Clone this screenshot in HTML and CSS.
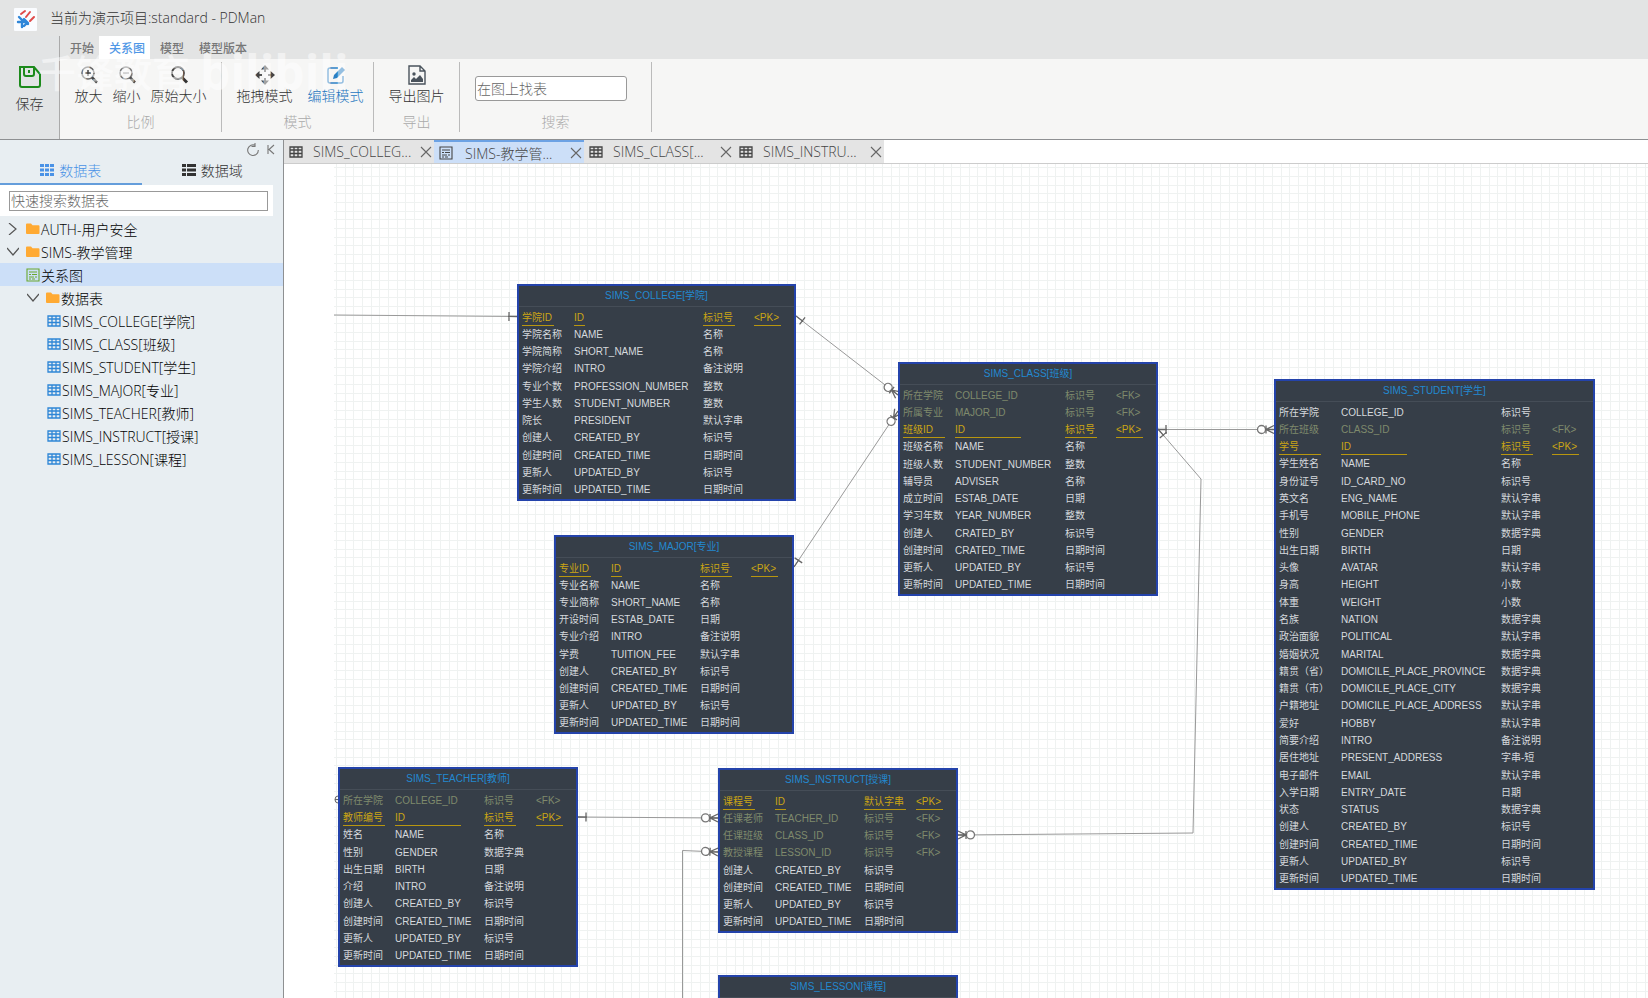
FILE: index.html
```html
<!DOCTYPE html>
<html lang="zh-CN">
<head>
<meta charset="utf-8">
<title>当前为演示项目:standard - PDMan</title>
<link rel="stylesheet" href="styles.css">
</head>
<body>
<svg class="sprite" aria-hidden="true">
  <symbol id="i-grid" viewBox="0 0 14 12"><path d="M1 1h12v10H1zM1 4h12M1 7.5h12M5 1v10M9 1v10" fill="none" stroke="currentColor" stroke-width="1.3"/></symbol>
  <symbol id="i-sheet" viewBox="0 0 14 14"><path d="M1 1h12v12H1z" fill="none" stroke="currentColor" stroke-width="1.1"/><path d="M3 4h8M3 6.500h2M6 6.500h5M3 9h5M9 9h2M3 11h2M6 11h3" fill="none" stroke="currentColor" stroke-width="1"/></symbol>
  <symbol id="i-folder" viewBox="0 0 14 12"><path d="M0 1.5Q0 .5 1 .5h4l1.5 1.7H12.500q1 0 1 1V10q0 1-1 1H1q-1 0-1-1z" fill="#ffaa33"/></symbol>
  <symbol id="i-right" viewBox="0 0 12 12"><path d="M2 0l7 6-7 6" fill="none" stroke="#555" stroke-width="1.2"/></symbol>
  <symbol id="i-down" viewBox="0 0 12 12"><path d="M0 2l6 7 6-7" fill="none" stroke="#555" stroke-width="1.2"/></symbol>
  <symbol id="i-close" viewBox="0 0 12 12"><path d="M1 1l10 10M11 1L1 11" fill="none" stroke="#666" stroke-width="1.1"/></symbol>
</svg>

<div class="app">
  <header class="titlebar">
    <svg class="logo" viewBox="0 0 23 23"><rect width="23" height="23" rx="1" fill="#fafcff"/><path d="M7 6l4-3M12 9l4-5M16 13l4-4" stroke="#e04a4a" stroke-width="2" stroke-linecap="round"/><path d="M5 9l4 4M10 11l4 4M4 14h7M9 13l5 3M8 16v3M13 15l-3 3" stroke="#2f86d8" stroke-width="2.400" fill="none" stroke-linecap="round" stroke-linejoin="round"/></svg>
    <h1 class="title">当前为演示项目:standard - PDMan</h1>
  </header>

  <div class="ribbon">
    <button class="save"><svg class="save-icon" viewBox="0 0 24 24"><path d="M2 2h14l6 7v11q0 2-2 2H4q-2 0-2-2zM6 2v7q0 2 2 2h6q2 0 2-2V2" fill="none" stroke="#1c8a1c" stroke-width="2"/><path d="M11 5v3" stroke="#1c8a1c" stroke-width="2"/></svg>保存</button>
    <div class="ribbon-main">
      <nav class="menu">
        <button class="menu-item">开始</button>
        <button class="menu-item active">关系图</button>
        <button class="menu-item">模型</button>
        <button class="menu-item">模型版本</button>
      </nav>
      <div class="groups">
        <section class="group zoomers">
          <div class="tools">
            <button class="tool"><svg class="icon" viewBox="0 0 20 20"><circle cx="9" cy="8" r="6" fill="none" stroke="#666" stroke-width="1.600"/><path d="M6 8h6M9 5v6" stroke="#444" stroke-width="1.500"/><path d="M13 12.500l5 5" stroke="#444" stroke-width="2.500"/></svg>放大</button>
            <button class="tool"><svg class="icon" viewBox="0 0 20 20"><circle cx="9" cy="8" r="6" fill="none" stroke="#777" stroke-width="1.600"/><path d="M6 8h6" stroke="#999" stroke-width="1.500"/><path d="M13 12.500l5 5" stroke="#444" stroke-width="2.500"/></svg>缩小</button>
            <button class="tool"><svg class="icon" viewBox="0 0 20 20"><circle cx="9" cy="8" r="6" fill="none" stroke="#444" stroke-width="1.800"/><path d="M13 12.500l5 5" stroke="#333" stroke-width="3"/></svg>原始大小</button>
          </div>
          <span class="group-name">比例</span>
        </section>
        <section class="group modes">
          <div class="tools">
            <button class="tool"><svg class="icon" viewBox="0 0 20 20"><path d="M10 3v4M10 13v4M3 10h4M13 10h4" stroke="#555" stroke-width="2"/><path d="M10 0l4 4.500H6zM10 20l4-4.500H6zM0 10l4.500-4v8zM20 10l-4.500-4v8z" fill="#444"/></svg>拖拽模式</button>
            <button class="tool current"><svg class="icon" viewBox="0 0 20 20"><path d="M12 3H4Q2 3 2 5v11q0 2 2 2h11q2 0 2-2v-5" fill="none" stroke="#2b7fc3" stroke-width="1.500"/><path d="M7 14l1-4 8-8 3 3-8 8z" fill="#2b7fc3"/></svg>编辑模式</button>
          </div>
          <span class="group-name">模式</span>
        </section>
        <section class="group export">
          <div class="tools">
            <button class="tool"><svg class="icon" viewBox="0 0 20 20"><path d="M2 1h11l5 5v13H2zM13 1v5h5" fill="none" stroke="#4a535c" stroke-width="1.400"/><circle cx="7" cy="9" r="1.700" fill="#4a535c"/><path d="M4 17v-2l3-3 2 2 4-4 3 4v3z" fill="#4a535c"/></svg>导出图片</button>
          </div>
          <span class="group-name">导出</span>
        </section>
        <section class="group finder">
          <input class="find" type="text" placeholder="在图上找表" aria-label="在图上找表">
          <span class="group-name">搜索</span>
        </section>
      </div>
    </div>
  </div>

  <div class="body">
    <aside class="sidebar">
      <div class="side-actions">
        <button class="mini" aria-label="刷新"><svg class="mini-icon" viewBox="0 0 14 14"><path d="M9.500 2.500A5.300 5.300 0 1 0 12.300 7M9 0v3.500H5.500" fill="none" stroke="#777" stroke-width="1.100"/></svg></button>
        <button class="mini" aria-label="收起"><svg class="mini-icon" viewBox="0 0 14 14"><path d="M4 2v9M10 2L5 6.500l5 4.500" fill="none" stroke="#777" stroke-width="1.100"/></svg></button>
      </div>
      <div class="side-tabs">
        <button class="side-tab active"><svg class="side-icon" viewBox="0 0 14 12"><path d="M0 0h4v3H0zM5 0h4v3H5zM10 0h4v3h-4zM0 4.500h4v3H0zM5 4.500h4v3H5zM10 4.500h4v3h-4zM0 9h4v3H0zM5 9h4v3H5zM10 9h4v3h-4z" fill="currentColor"/></svg>数据表</button>
        <button class="side-tab"><svg class="side-icon" viewBox="0 0 14 12"><path d="M0 0h4v3H0zM5 0h9v3H5zM0 4.500h4v3H0zM5 4.500h9v3H5zM0 9h4v3H0zM5 9h9v3H5z" fill="currentColor"/></svg>数据域</button>
      </div>
      <div class="side-search"><input class="search" type="text" placeholder="快速搜索数据表" aria-label="快速搜索数据表"></div>
      <ul class="tree">
        <li class="node"><svg class="arrow"><use href="#i-right"/></svg><svg class="glyph"><use href="#i-folder"/></svg>AUTH-用户安全</li>
        <li class="node"><svg class="arrow"><use href="#i-down"/></svg><svg class="glyph"><use href="#i-folder"/></svg>SIMS-教学管理</li>
        <li class="node relation selected"><svg class="glyph"><use href="#i-sheet"/></svg>关系图</li>
        <li class="node sub"><svg class="arrow"><use href="#i-down"/></svg><svg class="glyph"><use href="#i-folder"/></svg>数据表</li>
        <li class="node leaf"><svg class="glyph"><use href="#i-grid"/></svg>SIMS_COLLEGE[学院]</li>
        <li class="node leaf"><svg class="glyph"><use href="#i-grid"/></svg>SIMS_CLASS[班级]</li>
        <li class="node leaf"><svg class="glyph"><use href="#i-grid"/></svg>SIMS_STUDENT[学生]</li>
        <li class="node leaf"><svg class="glyph"><use href="#i-grid"/></svg>SIMS_MAJOR[专业]</li>
        <li class="node leaf"><svg class="glyph"><use href="#i-grid"/></svg>SIMS_TEACHER[教师]</li>
        <li class="node leaf"><svg class="glyph"><use href="#i-grid"/></svg>SIMS_INSTRUCT[授课]</li>
        <li class="node leaf"><svg class="glyph"><use href="#i-grid"/></svg>SIMS_LESSON[课程]</li>
      </ul>
    </aside>

    <main class="work">
      <div class="tabs">
        <div class="tab"><svg class="glyph"><use href="#i-grid"/></svg><span class="tab-name">SIMS_COLLEG...</span><button class="close" aria-label="关闭"><svg class="close-icon"><use href="#i-close"/></svg></button></div>
        <div class="tab active"><svg class="glyph"><use href="#i-sheet"/></svg><span class="tab-name">SIMS-教学管...</span><button class="close" aria-label="关闭"><svg class="close-icon"><use href="#i-close"/></svg></button></div>
        <div class="tab"><svg class="glyph"><use href="#i-grid"/></svg><span class="tab-name">SIMS_CLASS[...</span><button class="close" aria-label="关闭"><svg class="close-icon"><use href="#i-close"/></svg></button></div>
        <div class="tab"><svg class="glyph"><use href="#i-grid"/></svg><span class="tab-name">SIMS_INSTRU...</span><button class="close" aria-label="关闭"><svg class="close-icon"><use href="#i-close"/></svg></button></div>
      </div>
      <div class="canvas" id="canvas">
        <svg class="links">
          <defs>
            <marker id="one" markerUnits="userSpaceOnUse" markerWidth="12" markerHeight="12" refX="10" refY="6" orient="auto-start-reverse"><path d="M1 6h9M2 1.500v9" stroke="#666" stroke-width="1.300" fill="none"/></marker>
            <marker id="many" markerUnits="userSpaceOnUse" markerWidth="20" markerHeight="12" refX="18" refY="6" orient="auto-start-reverse"><circle cx="5.500" cy="6" r="4" fill="#fff" stroke="#777" stroke-width="1.300"/><path d="M10 2v8M10 6h8M10 6l8-4M10 6l8 4" stroke="#666" stroke-width="1.300" fill="none"/></marker>
          </defs>
          <g transform="translate(-334 -164)" fill="none" stroke="#999">
            <path d="M334 315L517 316.500" marker-end="url(#one)"/>
            <path d="M796 316L898 395" marker-start="url(#one)" marker-end="url(#many)"/>
            <path d="M794 567L898 411" marker-start="url(#one)" marker-end="url(#many)"/>
            <path d="M1158 429.500H1274" marker-start="url(#one)" marker-end="url(#many)"/>
            <path d="M1158 429L1201 479L1193 833L958 835" marker-start="url(#one)" marker-end="url(#many)"/>
            <path d="M578 817L718 818" marker-start="url(#one)" marker-end="url(#many)"/>
            <path d="M682.500 1400V850.500L718 852" marker-end="url(#many)"/>
            <path d="M338 796q-3 0-3 3.500t3 3.500M335 799.500h3" stroke="#666"/>
          </g>
        </svg>
      </div>
    </main>
  </div>

  <div class="watermark" aria-hidden="true"><span class="mark-name">千锋教育</span><span class="mark-site">bilibili</span></div>
</div>
<script src="diagram.js"></script>
</body>
</html>
```

FILE: styles.css
```css
* { box-sizing: border-box; }
body {
  margin: 0;
  font-family: "Open Sans", "Noto Sans CJK SC", sans-serif;
  font-size: 14px;
  font-weight: 300;
  color: #222;
}
button { font: inherit; color: inherit; background: none; border: 0; padding: 0; margin: 0; }
.sprite { display: none; }
.app { position: relative; display: flex; flex-direction: column; height: 100vh; overflow: hidden; background: #e3e4e4; }

.titlebar { display: flex; align-items: center; gap: 13px; height: 36px; padding: 2px 14px 0; flex: none; }
.logo { width: 23px; height: 23px; }
.title { margin: 0; font-size: 14px; line-height: 20px; padding-bottom: 2px; font-weight: 300; color: #333; }

.ribbon { display: flex; flex: none; height: 104px; border-bottom: 1px solid #8e9092; }
.save { display: flex; flex-direction: column; align-items: center; gap: 5px; width: 60px; padding-top: 29px; line-height: 20px; color: #333; border-right: 1px solid #aaa; background: #e2e4e5; }
.save-icon { width: 24px; height: 24px; }
.ribbon-main { flex: 1; display: flex; flex-direction: column; }
.menu { display: flex; height: 23px; }
.menu-item { padding: 0 10px; font-size: 12px; font-weight: 500; color: #777; }
.menu-item:first-child { padding-right: 5px; }
.menu-item.active { background: #fff; color: #4f97e6; padding-right: 5px; }
.menu-item:nth-child(3) { padding-right: 5px; }
.groups { display: flex; flex: 1; background: #f6f6f5; padding: 3px 0 7px; }
.group { display: flex; flex-direction: column; align-items: center; justify-content: space-between; border-right: 1px solid #bbb; }
.zoomers { width: 162px; }
.modes { width: 152px; }
.export { width: 86px; }
.finder { width: 192px; padding: 14px 24px 0 15px; align-items: stretch; }
.finder .group-name { padding-left: 9px; }
.tools { display: flex; }
.tool { display: flex; flex-direction: column; align-items: center; padding: 3px 5px 0; line-height: 20px; color: #333; white-space: nowrap; }
.modes .tools { gap: 15px; padding: 0 0 0 5px; }
.modes .tool { padding: 3px 0 0; }
.tool.current { color: #1f77c0; }
.icon { width: 20px; height: 20px; margin-bottom: 1px; }
.group-name { line-height: 20px; color: #aaa; text-align: center; }
.find { width: 100%; height: 25px; padding: 0 1px; border: 1px solid #999; border-radius: 3px; background: #fff; font: inherit; }
.find::placeholder, .search::placeholder { color: #666; opacity: 1; }

.body { display: flex; flex: 1; min-height: 0; }
.sidebar { width: 284px; flex: none; background: #e8eef2; border-right: 1px solid #8e9092; }
.side-actions { display: flex; justify-content: flex-end; gap: 4px; height: 19px; padding: 3px 5px 0 0; }
.mini, .mini-icon { width: 14px; height: 14px; display: block; }
.side-tabs { display: flex; height: 26px; }
.side-tab { flex: 1; display: flex; align-items: center; justify-content: center; gap: 5px; padding-bottom: 2px; border-bottom: 2px solid transparent; color: #333; }
.side-tab.active { color: #4a92e6; border-color: #649ddb; }
.side-icon { width: 14px; height: 12px; }
.side-search { margin-right: 10px; padding: 6px 5px 5px 9px; background: #fff; }
.search { display: block; width: 100%; height: 20px; padding: 0 1px 1px; border: 1px solid #999; background: #fff; font: inherit; }
.tree { list-style: none; margin: 1px 0 0; padding: 0; color: #000; }
.node { display: flex; align-items: center; height: 23px; padding-left: 7px; white-space: nowrap; }
.arrow { width: 12px; height: 12px; margin-right: 7px; }
.glyph { width: 14px; height: 14px; margin-right: 1px; flex: none; }
.relation { padding-left: 26px; }
.relation .glyph { color: #6aa82e; }
.selected { background: #ccdff8; }
.sub { padding-left: 27px; }
.leaf { padding-left: 47px; }
.leaf .glyph { color: #2e86d6; }

.work { flex: 1; min-width: 0; display: flex; flex-direction: column; background: #fff; }
.tabs { display: flex; height: 24px; flex: none; border-bottom: 1px solid #ccc; }
.tab { display: flex; align-items: center; width: 150px; padding: 0 0 0 5px; background: #e4e4e4; color: #444; }
.tab.active { background: #ccdff8; border-top: 2px solid #6ca2e4; }
.tab .glyph { color: #444; }
.tab-name { flex: 1; padding-left: 9px; white-space: nowrap; }
.tab.active .tab-name { padding-left: 11px; }
.close { width: 14px; height: 12px; }
.close-icon { display: block; width: 12px; height: 12px; }

.canvas {
  position: relative;
  flex: 1;
  margin-left: 50px;
  overflow: hidden;
  background-image:
    linear-gradient(to right, #eff2f1 1px, transparent 1px, transparent 9px, #eff2f1 9px, #eff2f1 10px, transparent 10px, transparent 17px, #eff2f1 17px, #eff2f1 18px, transparent 18px),
    linear-gradient(to bottom, #eff2f1 1px, transparent 1px, transparent 9px, #eff2f1 9px, #eff2f1 10px, transparent 10px, transparent 17px, #eff2f1 17px, #eff2f1 18px, transparent 18px);
  background-size: 26px 26px;
  background-position: 2px 12px;
}
.links { position: absolute; inset: 0; width: 100%; height: 100%; }

.entity {
  position: absolute;
  display: flex;
  flex-direction: column;
  border: 2px solid #2443ab;
  background: #363e48;
  color: #d5d9dd;
  font: 10px "Liberation Sans", "Noto Sans CJK SC", sans-serif;
}
.entity-name { height: 21px; line-height: 20px; text-align: center; color: #2389d0; border-bottom: 1px solid #454d57; flex: none; }
.fields { flex: 1; margin-top: 2px; border-collapse: collapse; table-layout: fixed; width: 100%; }
.fields td { padding: 0 0 0 3px; white-space: nowrap; overflow: visible; vertical-align: middle; }
.cell { display: block; height: 16px; line-height: 16px; }
.pk { color: #cba514; }
.pk .cell { line-height: 15px; border-bottom: 1px solid #b8960f; }
.fk { color: #7f8a6c; }

.watermark { position: absolute; left: 38px; top: 32px; display: flex; align-items: center; gap: 10px; color: #fff; opacity: 0.5; pointer-events: none; }
.mark-name { font-size: 38px; line-height: 80px; font-weight: 500; }
.mark-site { font-size: 48px; line-height: 64px; font-weight: 700; }
```

FILE: diagram.js
```js
// Columns shared by most entities.
const AUDIT = [
  ['创建人', 'CREATED_BY', '标识号'],
  ['创建时间', 'CREATED_TIME', '日期时间'],
  ['更新人', 'UPDATED_BY', '标识号'],
  ['更新时间', 'UPDATED_TIME', '日期时间']
];

// cols: widths of the first three columns; rule: key underline widths.
const ENTITIES = [
  { name: 'SIMS_COLLEGE[学院]', x: 183, y: 120, w: 279, h: 217, cols: [52, 129, 51], rule: [32, 11, 32, 27], rows: [
    ['学院ID', 'ID', '标识号', 'PK'],
    ['学院名称', 'NAME', '名称'],
    ['学院简称', 'SHORT_NAME', '名称'],
    ['学院介绍', 'INTRO', '备注说明'],
    ['专业个数', 'PROFESSION_NUMBER', '整数'],
    ['学生人数', 'STUDENT_NUMBER', '整数'],
    ['院长', 'PRESIDENT', '默认字串'],
    ...AUDIT] },
  { name: 'SIMS_CLASS[班级]', x: 564, y: 198, w: 260, h: 234, cols: [52, 110, 51], rule: [42, 66, 32, 27], rows: [
    ['所在学院', 'COLLEGE_ID', '标识号', 'FK'],
    ['所属专业', 'MAJOR_ID', '标识号', 'FK'],
    ['班级ID', 'ID', '标识号', 'PK'],
    ['班级名称', 'NAME', '名称'],
    ['班级人数', 'STUDENT_NUMBER', '整数'],
    ['辅导员', 'ADVISER', '名称'],
    ['成立时间', 'ESTAB_DATE', '日期'],
    ['学习年数', 'YEAR_NUMBER', '整数'],
    ['创建人', 'CRATED_BY', '标识号'],
    ['创建时间', 'CRATED_TIME', '日期时间'],
    ['更新人', 'UPDATED_BY', '标识号'],
    ['更新时间', 'UPDATED_TIME', '日期时间']] },
  { name: 'SIMS_STUDENT[学生]', x: 940, y: 215, w: 321, h: 511, cols: [62, 160, 51], rule: [42, 66, 32, 27], rows: [
    ['所在学院', 'COLLEGE_ID', '标识号'],
    ['所在班级', 'CLASS_ID', '标识号', 'FK'],
    ['学号', 'ID', '标识号', 'PK'],
    ['学生姓名', 'NAME', '名称'],
    ['身份证号', 'ID_CARD_NO', '标识号'],
    ['英文名', 'ENG_NAME', '默认字串'],
    ['手机号', 'MOBILE_PHONE', '默认字串'],
    ['性别', 'GENDER', '数据字典'],
    ['出生日期', 'BIRTH', '日期'],
    ['头像', 'AVATAR', '默认字串'],
    ['身高', 'HEIGHT', '小数'],
    ['体重', 'WEIGHT', '小数'],
    ['名族', 'NATION', '数据字典'],
    ['政治面貌', 'POLITICAL', '默认字串'],
    ['婚姻状况', 'MARITAL', '数据字典'],
    ['籍贯（省）', 'DOMICILE_PLACE_PROVINCE', '数据字典'],
    ['籍贯（市）', 'DOMICILE_PLACE_CITY', '数据字典'],
    ['户籍地址', 'DOMICILE_PLACE_ADDRESS', '默认字串'],
    ['爱好', 'HOBBY', '默认字串'],
    ['简要介绍', 'INTRO', '备注说明'],
    ['居住地址', 'PRESENT_ADDRESS', '字串-短'],
    ['电子邮件', 'EMAIL', '默认字串'],
    ['入学日期', 'ENTRY_DATE', '日期'],
    ['状态', 'STATUS', '数据字典'],
    ...AUDIT] },
  { name: 'SIMS_MAJOR[专业]', x: 220, y: 371, w: 240, h: 199, cols: [52, 89, 51], rule: [32, 11, 32, 27], rows: [
    ['专业ID', 'ID', '标识号', 'PK'],
    ['专业名称', 'NAME', '名称'],
    ['专业简称', 'SHORT_NAME', '名称'],
    ['开设时间', 'ESTAB_DATE', '日期'],
    ['专业介绍', 'INTRO', '备注说明'],
    ['学费', 'TUITION_FEE', '默认字串'],
    ...AUDIT] },
  { name: 'SIMS_TEACHER[教师]', x: 4, y: 603, w: 240, h: 200, cols: [52, 89, 52], rule: [42, 66, 32, 27], rows: [
    ['所在学院', 'COLLEGE_ID', '标识号', 'FK'],
    ['教师编号', 'ID', '标识号', 'PK'],
    ['姓名', 'NAME', '名称'],
    ['性别', 'GENDER', '数据字典'],
    ['出生日期', 'BIRTH', '日期'],
    ['介绍', 'INTRO', '备注说明'],
    ...AUDIT] },
  { name: 'SIMS_INSTRUCT[授课]', x: 384, y: 604, w: 240, h: 165, cols: [52, 89, 52], rule: [32, 11, 42, 27], rows: [
    ['课程号', 'ID', '默认字串', 'PK'],
    ['任课老师', 'TEACHER_ID', '标识号', 'FK'],
    ['任课班级', 'CLASS_ID', '标识号', 'FK'],
    ['教授课程', 'LESSON_ID', '标识号', 'FK'],
    ...AUDIT] },
  { name: 'SIMS_LESSON[课程]', x: 384, y: 811, w: 240, h: 131, cols: [52, 89, 52], rule: [], rows: [] }
];

const canvas = document.getElementById('canvas');
for (const e of ENTITIES) {
  const box = document.createElement('div');
  box.className = 'entity';
  box.style.cssText = `left:${e.x}px;top:${e.y}px;width:${e.w}px;height:${e.h}px`;
  const cols = e.cols.map(w => `<col style="width:${w}px">`).join('') + '<col>';
  const rows = e.rows.map(r => {
    const key = r[3] || '';
    const cells = [0, 1, 2, 3].map(i => {
      let text = r[i] || '';
      if (i === 3 && key) text = `&lt;${key}&gt;`;
      const width = key === 'PK' ? ` style="width:${e.rule[i]}px"` : '';
      return `<td><span class="cell"${width}>${text}</span></td>`;
    }).join('');
    return `<tr class="${key.toLowerCase()}">${cells}</tr>`;
  }).join('');
  box.innerHTML = `<div class="entity-name">${e.name}</div><table class="fields"><colgroup>${cols}</colgroup><tbody>${rows}</tbody></table>`;
  canvas.appendChild(box);
}
```
